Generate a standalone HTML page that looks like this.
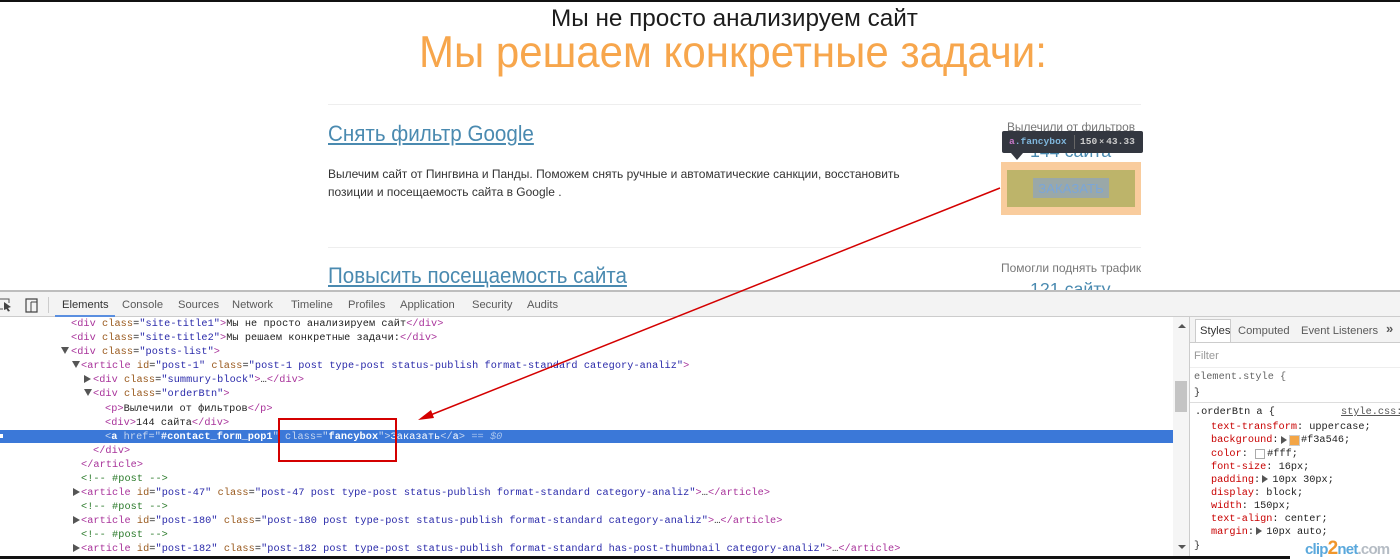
<!DOCTYPE html>
<html><head><meta charset="utf-8">
<style>
html,body{margin:0;padding:0;background:#fff}
body{width:1400px;height:559px;position:relative;overflow:hidden;font-family:"Liberation Sans",sans-serif}
.a{position:absolute;white-space:nowrap}
.sx{transform-origin:0 0}
.c{position:absolute;white-space:pre;font-family:"Liberation Mono",monospace;font-size:10.24px;letter-spacing:.065px;line-height:14px;height:14px;color:#222;margin-top:1px}
.t{color:#a8329a}.n{color:#9a5a1e}.v{color:#2a2aaa}.g{color:#2a7a2a}
.tb{position:absolute;top:298px;font-size:11.2px;line-height:14px;color:#5a5a5a;white-space:nowrap}
.arr{position:absolute;width:0;height:0;border-style:solid}
.r{position:absolute;white-space:pre;font-family:"Liberation Mono",monospace;font-size:10.24px;line-height:13px;color:#222;margin-top:1px}
.p{color:#c80000}
</style></head><body>
<div class="a" style="left:0;top:0;width:1400px;height:2px;background:#111"></div>

<div class="a" style="left:551px;top:4px;font-size:24.3px;line-height:30px;color:#1c1c1c">Мы не просто анализируем сайт</div>
<div class="a sx" style="left:419px;top:27px;font-size:44.5px;line-height:52px;color:#f7a64c;transform:scaleX(.944)">Мы решаем конкретные задачи:</div>

<div class="a" style="left:328px;top:104px;width:813px;height:1px;background:#eee"></div>
<div class="a sx" style="left:328px;top:120px;font-size:22px;line-height:27px;color:#4a8ab0;text-decoration:underline;transform:scaleX(.936)">Снять фильтр Google</div>
<div class="a sx" style="left:328px;top:165px;font-size:12.2px;line-height:18px;color:#333;transform:scaleX(.984)">Вылечим сайт от Пингвина и Панды. Поможем снять ручные и автоматические санкции, восстановить<br>позиции и посещаемость сайта в Google .</div>

<div class="a" style="left:1007px;top:120px;font-size:11.9px;line-height:14px;color:#777">Вылечили от фильтров</div>
<div class="a" style="left:1030px;top:141px;font-size:17.8px;line-height:20px;color:#4a8ab0">144 сайта</div>

<div class="a" style="left:1001px;top:162px;width:140px;height:53px;background:#f9cc9d"></div>
<div class="a" style="left:1007px;top:170px;width:128px;height:37px;background:#bdb46a"></div>
<div class="a" style="left:1033px;top:178px;width:76px;height:20px;background:#9aa8a8"></div>
<div class="a" style="left:1033px;top:178px;width:76px;height:20px;text-align:center;font-size:13.2px;line-height:21px;color:#7ba6d8">ЗАКАЗАТЬ</div>

<div class="a" style="left:1002px;top:131px;width:141px;height:22px;background:#333740;border-radius:2px"></div>
<div class="arr" style="left:1011px;top:153px;border-width:7px 6px 0 6px;border-color:#333740 transparent transparent transparent"></div>
<div class="a" style="left:1009px;top:135px;font-family:'Liberation Mono',monospace;font-weight:bold;font-size:9.6px;line-height:14px;color:#7fb6dc"><span style="color:#c678c8">a</span>.fancybox</div>
<div class="a" style="left:1074px;top:135px;width:1px;height:14px;background:#666"></div>
<div class="a" style="left:1080px;top:135px;font-family:'Liberation Mono',monospace;font-weight:bold;font-size:9.6px;line-height:14px;color:#ccc">150<span style="font-size:8px;margin:0 2px">×</span>43.33</div>

<div class="a" style="left:328px;top:247px;width:813px;height:1px;background:#eee"></div>
<div class="a sx" style="left:328px;top:262px;font-size:22px;line-height:27px;color:#4a8ab0;text-decoration:underline;transform:scaleX(.934)">Повысить посещаемость сайта</div>
<div class="a" style="left:1001px;top:261px;font-size:12px;line-height:14px;color:#777">Помогли поднять трафик</div>
<div class="a" style="left:1030px;top:279px;font-size:17.8px;line-height:20px;color:#4a8ab0">121 сайту</div>

<!-- devtools -->
<div class="a" style="left:0;top:291px;width:1400px;height:268px;background:#fff"></div>
<div class="a" style="left:0;top:290px;width:1400px;height:2px;background:#bdbdbd"></div>
<div class="a" style="left:0;top:292px;width:1400px;height:24px;background:#f3f3f3;border-bottom:1px solid #ccc"></div>
<svg class="a" style="left:0;top:296px" width="42" height="18" viewBox="0 0 42 18"><path d="M-2 3H9V7M3 13H-2" fill="none" stroke="#555" stroke-width="1"/><path d="M4 6L11 11L8 12L10 15L8 15.500L6.500 13L4 14Z" fill="#444"/><path d="M26 3H37V16H26Z" fill="none" stroke="#444" stroke-width="1.200"/><path d="M31 6H37M31 6V16" fill="none" stroke="#444"/></svg>
<div class="a" style="left:48px;top:297px;width:1px;height:16px;background:#ccc"></div>
<div class="tb" style="left:62px;color:#333">Elements</div>
<div class="a" style="left:55px;top:315px;width:60px;height:2px;background:#5a8fe0"></div>
<div class="tb" style="left:122px">Console</div>
<div class="tb" style="left:178px">Sources</div>
<div class="tb" style="left:232px">Network</div>
<div class="tb" style="left:291px">Timeline</div>
<div class="tb" style="left:348px">Profiles</div>
<div class="tb" style="left:400px">Application</div>
<div class="tb" style="left:472px">Security</div>
<div class="tb" style="left:527px">Audits</div>

<div class="c" style="left:71px;top:316px"><span class="t">&lt;div</span> <span class="n">class</span>=<span class="v">"site-title1"</span><span class="t">&gt;</span>Мы не просто анализируем сайт<span class="t">&lt;/div&gt;</span></div>
<div class="c" style="left:71px;top:330px"><span class="t">&lt;div</span> <span class="n">class</span>=<span class="v">"site-title2"</span><span class="t">&gt;</span>Мы решаем конкретные задачи:<span class="t">&lt;/div&gt;</span></div>
<div class="c" style="left:71px;top:344px"><span class="t">&lt;div</span> <span class="n">class</span>=<span class="v">"posts-list"</span><span class="t">&gt;</span></div>
<div class="c" style="left:81px;top:358px"><span class="t">&lt;article</span> <span class="n">id</span>=<span class="v">"post-1"</span> <span class="n">class</span>=<span class="v">"post-1 post type-post status-publish format-standard category-analiz"</span><span class="t">&gt;</span></div>
<div class="c" style="left:93px;top:372px"><span class="t">&lt;div</span> <span class="n">class</span>=<span class="v">"summury-block"</span><span class="t">&gt;</span>…<span class="t">&lt;/div&gt;</span></div>
<div class="c" style="left:93px;top:386px"><span class="t">&lt;div</span> <span class="n">class</span>=<span class="v">"orderBtn"</span><span class="t">&gt;</span></div>
<div class="c" style="left:105px;top:401px"><span class="t">&lt;p&gt;</span>Вылечили от фильтров<span class="t">&lt;/p&gt;</span></div>
<div class="c" style="left:105px;top:415px"><span class="t">&lt;div&gt;</span>144 сайта<span class="t">&lt;/div&gt;</span></div>
<div class="a" style="left:0;top:430px;width:1173px;height:13px;background:#3b78d8"></div>
<div class="a" style="left:0;top:434px;width:3px;height:4px;background:#fff"></div>
<div class="c" style="left:105px;top:429px;color:#fff"><span style="color:#c8d8f0">&lt;</span><b>a</b> <span style="color:#c8d8f0">href="</span><b>#contact_form_pop1</b><span style="color:#c8d8f0">" class="</span><b>fancybox</b><span style="color:#c8d8f0">"&gt;</span>Заказать<span style="color:#c8d8f0">&lt;/</span>a<span style="color:#c8d8f0">&gt;</span> <span style="color:#a8c4ee">== <i>$0</i></span></div>
<div class="c" style="left:93px;top:443px"><span class="t">&lt;/div&gt;</span></div>
<div class="c" style="left:81px;top:457px"><span class="t">&lt;/article&gt;</span></div>
<div class="c g" style="left:81px;top:471px">&lt;!-- #post --&gt;</div>
<div class="c" style="left:81px;top:485px"><span class="t">&lt;article</span> <span class="n">id</span>=<span class="v">"post-47"</span> <span class="n">class</span>=<span class="v">"post-47 post type-post status-publish format-standard category-analiz"</span><span class="t">&gt;</span>…<span class="t">&lt;/article&gt;</span></div>
<div class="c g" style="left:81px;top:499px">&lt;!-- #post --&gt;</div>
<div class="c" style="left:81px;top:513px"><span class="t">&lt;article</span> <span class="n">id</span>=<span class="v">"post-180"</span> <span class="n">class</span>=<span class="v">"post-180 post type-post status-publish format-standard category-analiz"</span><span class="t">&gt;</span>…<span class="t">&lt;/article&gt;</span></div>
<div class="c g" style="left:81px;top:527px">&lt;!-- #post --&gt;</div>
<div class="c" style="left:81px;top:541px"><span class="t">&lt;article</span> <span class="n">id</span>=<span class="v">"post-182"</span> <span class="n">class</span>=<span class="v">"post-182 post type-post status-publish format-standard has-post-thumbnail category-analiz"</span><span class="t">&gt;</span>…<span class="t">&lt;/article&gt;</span></div>

<div class="arr" style="left:61px;top:347px;border-width:7px 4px 0 4px;border-color:#555 transparent transparent transparent"></div>
<div class="arr" style="left:72px;top:361px;border-width:7px 4px 0 4px;border-color:#555 transparent transparent transparent"></div>
<div class="arr" style="left:84px;top:375px;border-width:4px 0 4px 7px;border-color:transparent transparent transparent #555"></div>
<div class="arr" style="left:84px;top:389px;border-width:7px 4px 0 4px;border-color:#555 transparent transparent transparent"></div>
<div class="arr" style="left:73px;top:488px;border-width:4px 0 4px 7px;border-color:transparent transparent transparent #555"></div>
<div class="arr" style="left:73px;top:516px;border-width:4px 0 4px 7px;border-color:transparent transparent transparent #555"></div>
<div class="arr" style="left:73px;top:544px;border-width:4px 0 4px 7px;border-color:transparent transparent transparent #555"></div>

<!-- scrollbar and side panel -->
<div class="a" style="left:1173px;top:317px;width:16px;height:242px;background:#f5f5f5"></div>
<div class="arr" style="left:1178px;top:324px;border-width:0 4px 4px 4px;border-color:transparent transparent #555 transparent"></div>
<div class="a" style="left:1175px;top:381px;width:12px;height:31px;background:#c4c4c4"></div>
<div class="arr" style="left:1178px;top:545px;border-width:4px 4px 0 4px;border-color:#555 transparent transparent transparent"></div>
<div class="a" style="left:1189px;top:317px;width:1px;height:242px;background:#ccc"></div>
<div class="a" style="left:1190px;top:317px;width:210px;height:25px;background:#f3f3f3;border-bottom:1px solid #ccc"></div>
<div class="a" style="left:1195px;top:319px;width:36px;height:23px;background:#fff;border:1px solid #ccc;border-bottom:0;box-sizing:border-box"></div>
<div class="tb" style="left:1200px;top:324px;color:#333">Styles</div>
<div class="tb" style="left:1238px;top:324px">Computed</div>
<div class="tb" style="left:1301px;top:324px">Event Listeners</div>
<div class="tb" style="left:1386px;top:322px;font-weight:bold;font-size:13px">»</div>
<div class="tb" style="left:1194px;top:349px;color:#999">Filter</div>
<div class="a" style="left:1190px;top:367px;width:210px;height:1px;background:#eee"></div>
<div class="r" style="left:1194px;top:370px;color:#666">element.style {</div>
<div class="r" style="left:1194px;top:386px;color:#333">}</div>
<div class="a" style="left:1190px;top:402px;width:210px;height:1px;background:#ddd"></div>
<div class="r" style="left:1195px;top:405px">.orderBtn a {</div>
<div class="r" style="left:1341px;top:405px;color:#555;text-decoration:underline">style.css:</div>
<div class="r" style="left:1211px;top:420px"><span class="p">text-transform</span>: uppercase;</div>
<div class="r" style="left:1211px;top:433px"><span class="p">background</span>:  <span style="display:inline-block;width:4px"></span> #f3a546;</div>
<div class="arr" style="left:1281px;top:436px;border-width:4px 0 4px 6px;border-color:transparent transparent transparent #555"></div>
<div class="a" style="left:1289px;top:435px;width:9px;height:9px;background:#f3a546;border:1px solid #ccc"></div>
<div class="r" style="left:1211px;top:447px"><span class="p">color</span>:  <span style="display:inline-block;width:7px"></span>#fff;</div>
<div class="a" style="left:1255px;top:449px;width:8px;height:8px;background:#fff;border:1px solid #aaa"></div>
<div class="r" style="left:1211px;top:460px"><span class="p">font-size</span>: 16px;</div>
<div class="r" style="left:1211px;top:473px"><span class="p">padding</span>:  10px 30px;</div>
<div class="arr" style="left:1262px;top:475px;border-width:4px 0 4px 6px;border-color:transparent transparent transparent #555"></div>
<div class="r" style="left:1211px;top:486px"><span class="p">display</span>: block;</div>
<div class="r" style="left:1211px;top:499px"><span class="p">width</span>: 150px;</div>
<div class="r" style="left:1211px;top:512px"><span class="p">text-align</span>: center;</div>
<div class="r" style="left:1211px;top:525px"><span class="p">margin</span>:  10px auto;</div>
<div class="arr" style="left:1256px;top:527px;border-width:4px 0 4px 6px;border-color:transparent transparent transparent #555"></div>
<div class="r" style="left:1194px;top:539px;color:#333">}</div>
<div class="a" style="left:1305px;top:540px;font-size:15px;line-height:18px;font-weight:bold;color:#5aa8dc;letter-spacing:-.8px">clip<span style="color:#f0962c;font-size:19px">2</span>net<span style="color:#b5bcc4">.com</span></div>

<!-- annotations -->
<div class="a" style="left:278px;top:418px;width:119px;height:44px;box-sizing:border-box;border:2px solid #d40000"></div>
<svg class="a" style="left:0;top:0" width="1400" height="559"><line x1="1000" y1="188" x2="428" y2="416" stroke="#d40000" stroke-width="1.500"/><path d="M418 420L431 410L434 418Z" fill="#d40000"/></svg>
<div class="a" style="left:0;top:556px;width:1290px;height:3px;background:#111"></div>
</body></html>
